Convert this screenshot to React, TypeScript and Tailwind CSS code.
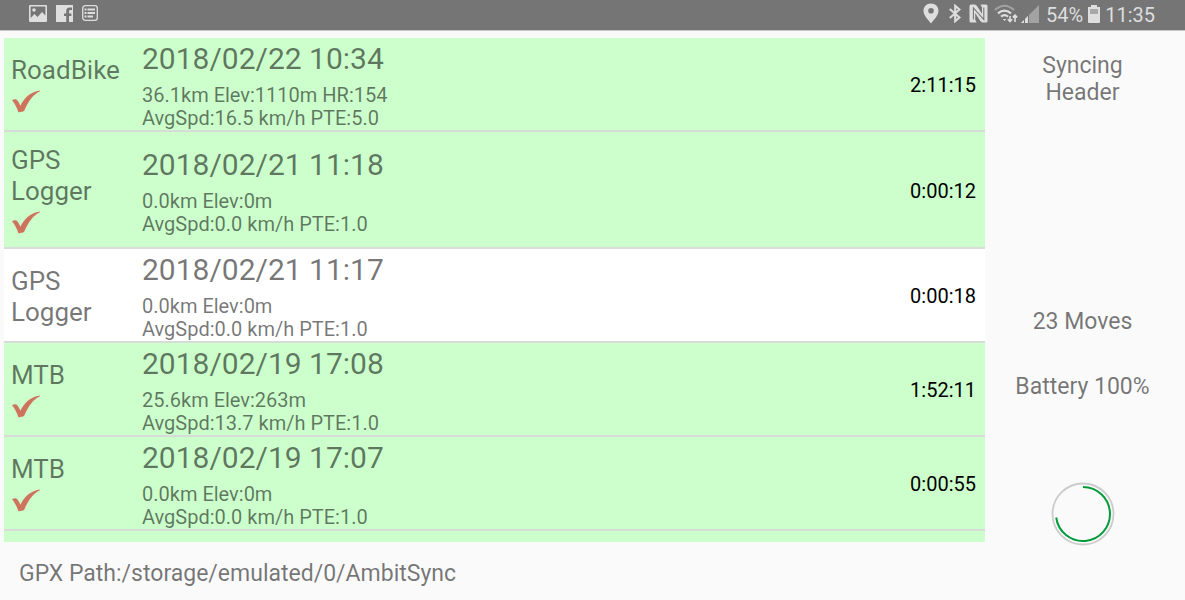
type Move = {
  sport: string;
  date: string;
  summary: string;
  detail: string;
  duration: string;
  synced: boolean;
};

const moves: Move[] = [
  { sport: "RoadBike", date: "2018/02/22 10:34", summary: "36.1km Elev:1110m HR:154", detail: "AvgSpd:16.5 km/h PTE:5.0", duration: "2:11:15", synced: true },
  { sport: "GPS Logger", date: "2018/02/21 11:18", summary: "0.0km Elev:0m", detail: "AvgSpd:0.0 km/h PTE:1.0", duration: "0:00:12", synced: true },
  { sport: "GPS Logger", date: "2018/02/21 11:17", summary: "0.0km Elev:0m", detail: "AvgSpd:0.0 km/h PTE:1.0", duration: "0:00:18", synced: false },
  { sport: "MTB", date: "2018/02/19 17:08", summary: "25.6km Elev:263m", detail: "AvgSpd:13.7 km/h PTE:1.0", duration: "1:52:11", synced: true },
  { sport: "MTB", date: "2018/02/19 17:07", summary: "0.0km Elev:0m", detail: "AvgSpd:0.0 km/h PTE:1.0", duration: "0:00:55", synced: true },
];

function CheckMark() {
  return (
    <svg viewBox="0 0 30 30" className="size-[30px]" role="img" aria-label="Synced">
      <path
        d="M1 14.2 C2.4 13.3 4.2 13 5.4 13.4 C7.2 14.8 8.4 17 9.4 19.8 C13 12 19 5.8 28.8 4.4 L29 5.3 C22.4 8.2 17.4 15 13.2 24.8 C11.6 26 9.2 26.3 7.4 26.2 C5.8 21.4 3.8 17.4 1 14.2Z"
        fill="#cf745c"
      />
    </svg>
  );
}

function StatusBar() {
  return (
    <header className="flex h-[30px] shrink-0 items-center justify-between bg-[#757575] pr-[30px] pl-[29px] text-[#dedede] shadow-[0_1px_0_#c8c8c8]">
      <div className="flex items-center gap-[9px] pb-1">
        <svg viewBox="0 0 18 17" className="h-[17px] w-[18px]" aria-hidden="true">
          <path fillRule="evenodd" fill="currentColor" d="M1 0H17Q18 0 18 1V16Q18 17 17 17H1Q0 17 0 16V1Q0 0 1 0ZM1.6 1.6V13L5.5 9L8.5 12L13 7L16.4 10.5V1.6Z" />
          <circle cx="5" cy="5" r="1.8" fill="currentColor" />
        </svg>
        <svg viewBox="0 0 17 17" className="size-[17px]" aria-hidden="true">
          <path fill="currentColor" d="M0 0H17V17H13V11H15.4V8.4H13V6.4Q13 5 14.4 5H16V2.4H13.6Q10.2 2.4 10.2 6V8.4H8V11H10.2V17H0Z" />
        </svg>
        <svg viewBox="0 0 16 16" className="size-4" fill="none" stroke="currentColor" aria-hidden="true">
          <rect x="0.7" y="0.7" width="14.6" height="14.6" rx="2.6" strokeWidth="1.3" />
          <path d="M2.5 4.5H4.5M2.5 8H4.5M2.5 11.5H4.5M5.5 4.5H13M5.5 8H13M5.5 11.5H11" strokeWidth="2" />
        </svg>
      </div>
      <div className="flex items-center">
        <svg viewBox="0 0 16 21" className="mr-[10px] mb-1 h-[21px] w-4" aria-hidden="true">
          <path fillRule="evenodd" fill="currentColor" d="M8 0.5C3.6 0.5 0.5 3.7 0.5 7.7C0.5 12.5 5 16.5 8 20.5C11 16.5 15.5 12.5 15.5 7.7C15.5 3.7 12.4 0.5 8 0.5ZM8 5A2.8 2.8 0 1 1 8 10.6A2.8 2.8 0 1 1 8 5Z" />
        </svg>
        <svg viewBox="0 0 12 19" className="mr-2 mb-1 h-[19px] w-3" fill="none" stroke="currentColor" strokeWidth="2.1" aria-hidden="true">
          <path d="M0.8 5L10.5 13.5L6.2 17.2V1.8L10.5 5.5L0.8 14" />
        </svg>
        <svg viewBox="0 0 19 19" className="mr-[6px] mb-1 size-[19px]" aria-hidden="true">
          <path fill="currentColor" d="M2 0.5H5.5Q7 0.6 8 2L13 10V3.6L11.6 0.5H17Q18.5 0.5 18.5 2V17Q18.5 18.5 17 18.5H13.8Q12.3 18.4 11.3 17L6.2 9V15.4L7.6 18.5H2Q0.5 18.5 0.5 17V2Q0.5 0.5 2 0.5Z" />
          <path d="M4.4 15.5V4L14.8 15.6V3.5" stroke="#757575" fill="none" strokeWidth="1.1" />
        </svg>
        <svg viewBox="0 0 24 19" className="mr-[3px] mb-1 h-[19px] w-6" fill="none" stroke="currentColor" aria-hidden="true">
          <path d="M1 6Q10.5 -2.6 20 6" stroke="#a3a3a3" strokeWidth="2" />
          <path d="M4 9.4Q10.5 3.8 17 9.4" strokeWidth="2.2" />
          <path d="M7 12.6Q10.5 9.6 14 12.6" strokeWidth="2.2" />
          <path d="M8.8 15H12.2L10.5 17Z" fill="currentColor" stroke="none" />
          <path d="M16 12V17.5M13.8 15.3L16 17.6L18.2 15.3M21 18V11.5M18.8 13.4L21 11.2L23.2 13.4" strokeWidth="1.6" />
        </svg>
        <svg viewBox="0 0 18 18" className="mr-[7px] mb-[3px] size-[18px]" aria-hidden="true">
          <path d="M18 0V18H0Z" fill="#a3a3a3" />
          <path d="M7 11V18H0Z" fill="currentColor" />
          <path d="M3.5 12V18M7.5 9V18" stroke="#757575" strokeWidth="1" />
        </svg>
        <span className="text-[20px] leading-6">54%</span>
        <svg viewBox="0 0 12 18" className="mx-[5px] mb-[3px] h-[18px] w-3" aria-hidden="true">
          <path d="M3 0H9V2H12V9H0V2H3Z" fill="#a8a8a8" />
          <path fillRule="evenodd" d="M3 0H9V2H12V17Q12 18 11 18H1Q0 18 0 17V2H3ZM2 4V9H10V4Z" fill="currentColor" />
        </svg>
        <time className="text-[20px] leading-6">11:35</time>
      </div>
    </header>
  );
}

function MoveRow({ move }: { move: Move }) {
  const tall = move.synced && move.sport.includes(" ");
  return (
    <li className={`flex shrink-0 items-center border-b-2 border-[#d8dcd8] pr-[9px] pl-[7px] ${move.synced ? "bg-[#ccffcc]" : "bg-white"} ${tall ? "min-h-[117px]" : "min-h-[94px]"}`}>
      <div className="w-[131px] shrink-0 pt-[3px] pr-5 text-[26px] leading-[31px]">
        <div>{move.sport}</div>
        {move.synced && <CheckMark />}
      </div>
      <div className="flex-1 pt-[3px]">
        <h2 className="mb-2 text-[30px] leading-[35px]">{move.date}</h2>
        <p className="text-[20px] leading-[23px]">{move.summary}</p>
        <p className="text-[20px] leading-[23px]">{move.detail}</p>
      </div>
      <time className="pt-[2px] text-[20px] leading-6 text-black">{move.duration}</time>
    </li>
  );
}

function Spinner() {
  return (
    <svg viewBox="0 0 64 64" className="size-16" fill="none" role="img" aria-label="Syncing">
      <circle cx="32" cy="32" r="30.5" stroke="#cccccc" strokeWidth="1.8" />
      <path d="M32 5A27 27 0 1 1 5.2 35.5" stroke="#009b3a" strokeWidth="2" />
    </svg>
  );
}

export default function App() {
  return (
    <div className="flex h-screen flex-col overflow-hidden bg-[#fafafa] font-['Roboto',sans-serif] text-black/54">
      <StatusBar />
      <div className="flex min-h-0 flex-1 pt-2 pr-[5px] pl-1">
        <main className="min-w-0 flex-1 overflow-hidden bg-[#ccffcc]">
          <ul className="flex flex-col">
            {moves.map((move) => (
              <MoveRow key={move.date} move={move} />
            ))}
          </ul>
        </main>
        <aside className="flex w-[195px] shrink-0 flex-col items-center pt-[14px] text-center text-[23px] leading-[27px]">
          <p className="w-[100px]">Syncing Header</p>
          <p className="mt-auto">23 Moves</p>
          <p className="mt-[38px] mb-[82px]">Battery 100%</p>
          <div className="-mb-1">
            <Spinner />
          </div>
        </aside>
      </div>
      <footer className="flex h-[58px] shrink-0 items-center px-[19px] pt-1 text-[23px] leading-[27px]">
        GPX Path:/storage/emulated/0/AmbitSync
      </footer>
    </div>
  );
}
